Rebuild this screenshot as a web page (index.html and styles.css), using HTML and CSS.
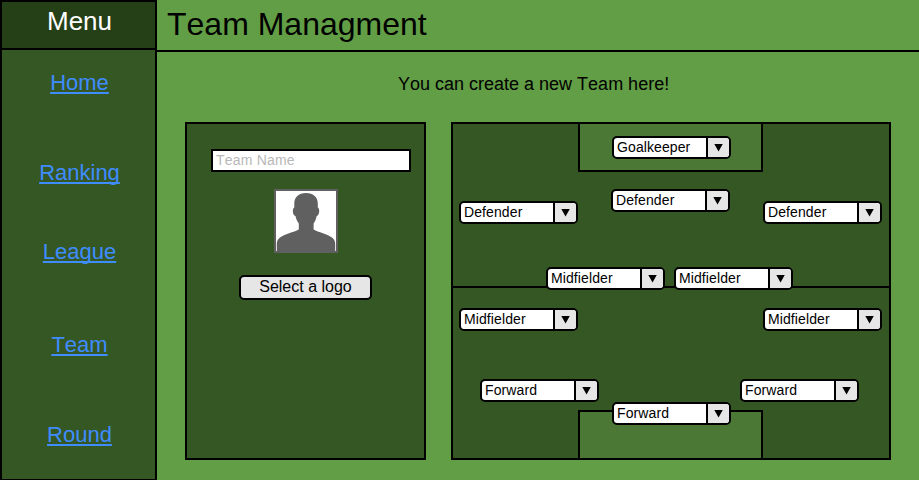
FILE: index.html
```html
<!DOCTYPE html>
<html lang="en">
<head>
<meta charset="utf-8">
<title>Team Managment</title>
<link rel="stylesheet" href="styles.css">
</head>
<body>
<div class="app">
  <aside class="sidebar">
    <h2 class="sidebar-title">Menu</h2>
    <nav class="nav">
      <a class="nav-home" href="#">Home</a>
      <a class="nav-ranking" href="#">Ranking</a>
      <a class="nav-league" href="#">League</a>
      <a class="nav-team" href="#">Team</a>
      <a class="nav-round" href="#">Round</a>
    </nav>
  </aside>
  <main class="main">
    <h1 class="title">Team Managment</h1>
    <p class="intro">You can create a new Team here!</p>
    <div class="panels">
      <section class="team-card">
        <input class="team-name" type="text" placeholder="Team Name">
        <svg class="avatar" viewBox="0 0 64 64">
          <rect x="1" y="1" width="62" height="62" fill="#fff" stroke="#606060" stroke-width="2"/>
          <path fill="#606060" d="M32 4C24.500 4 20.300 8.500 20.300 14.500V18.500C18.200 19.500 18.300 26 21.500 27C22 30.500 23.500 32.500 24.800 34.500V40.500C20 43 10 45.500 6 48.500C3.500 50.500 2.800 52.500 2.800 55V62H61.200V55C61.200 52.500 60.500 50.500 58 48.500C54 45.500 44 43 39.600 40.500V34.500C41 32.500 42 30.500 42.700 27C45.800 26 45.900 19.500 43.800 18.500V14.500C43.800 8.500 39.500 4 32 4Z"/>
        </svg>
        <button class="logo-button" type="button">Select a logo</button>
      </section>
      <section class="pitch">
        <div class="goal goal-top"></div>
        <div class="halfway"></div>
        <div class="goal goal-bottom"></div>
        <div class="select goalkeeper"><span>Goalkeeper</span><i></i></div>
        <div class="select defender-left"><span>Defender</span><i></i></div>
        <div class="select defender-center"><span>Defender</span><i></i></div>
        <div class="select defender-right"><span>Defender</span><i></i></div>
        <div class="select mid-center-left"><span>Midfielder</span><i></i></div>
        <div class="select mid-center-right"><span>Midfielder</span><i></i></div>
        <div class="select mid-left"><span>Midfielder</span><i></i></div>
        <div class="select mid-right"><span>Midfielder</span><i></i></div>
        <div class="select forward-left"><span>Forward</span><i></i></div>
        <div class="select forward-right"><span>Forward</span><i></i></div>
        <div class="select forward-center"><span>Forward</span><i></i></div>
      </section>
    </div>
  </main>
</div>
</body>
</html>
```
FILE: styles.css
```css
* { box-sizing: border-box; }

body {
  margin: 0;
  font-family: "Liberation Sans", Arial, sans-serif;
  font-kerning: none;
  color: #000;
  background: #629e45;
}

.app {
  display: flex;
  height: 480px;
  overflow: hidden;
}

.sidebar {
  width: 157px;
  height: 481px;
  border: 2px solid #000;
  background: #355723;
}

.sidebar-title {
  height: 48px;
  margin: 0;
  padding: 4px 0 0 2px;
  border-bottom: 2px solid #000;
  background: #253f17;
  color: #fff;
  font-size: 26px;
  font-weight: 400;
  line-height: 30px;
  text-align: center;
}

.nav {
  display: flex;
  flex-direction: column;
  align-items: center;
  padding: 20px 0 0 2px;
}

.nav a {
  color: #3f8cff;
  font-size: 22px;
  line-height: 26px;
  text-decoration: underline;
  text-decoration-thickness: 2px;
  text-decoration-skip-ink: none;
  text-underline-offset: 2px;
}

.nav-home { margin-bottom: 64px; }
.nav-ranking { margin-bottom: 53px; }
.nav-league { margin-bottom: 67px; }
.nav-team { margin-bottom: 64px; }

.main { flex: 1; }

.title {
  height: 52px;
  margin: 0;
  padding: 6px 0 0 10px;
  border-bottom: 2px solid #000;
  font-size: 32px;
  font-weight: 400;
  line-height: 36px;
}

.intro {
  margin: 22px 0 28px 241px;
  font-size: 18px;
  line-height: 20px;
}

.panels {
  display: flex;
  gap: 25px;
  padding-left: 28px;
}

.team-card,
.pitch {
  height: 338px;
  border: 2px solid #000;
  background: #355723;
}

.team-card {
  display: flex;
  flex-direction: column;
  align-items: center;
  width: 241px;
  padding: 25px 0 0 1px;
}

.team-name {
  width: 200px;
  height: 23px;
  margin-left: 10px;
  padding: 0 3px 2px;
  border: 2px solid #000;
  border-radius: 0;
  background: #fff;
  font: 14px "Liberation Sans", Arial, sans-serif;
  font-kerning: none;
  letter-spacing: 0.2px;
}

.team-name::placeholder { color: #b8b8b8; }

.avatar {
  display: block;
  width: 64px;
  height: 64px;
  margin: 17px 0 22px;
}

.logo-button {
  width: 133px;
  height: 25px;
  margin-right: 2px;
  padding: 0 0 2px 1px;
  border: 2px solid #000;
  border-radius: 5px;
  background: #e6e6e6;
  color: #000;
  font: 16px/18px "Liberation Sans", Arial, sans-serif;
}

/* Football pitch: players are placed freely on the field */
.pitch {
  position: relative;
  width: 440px;
}

.goal {
  position: absolute;
  left: 125px;
  width: 185px;
  height: 50px;
  border: 2px solid #000;
  background: #4b7935;
}

.goal-top { top: -2px; }
.goal-bottom { bottom: -2px; }

.halfway {
  position: absolute;
  top: 162px;
  left: 0;
  width: 100%;
  height: 2px;
  background: #000;
}

.select {
  position: absolute;
  display: flex;
  width: 119px;
  height: 23px;
  overflow: hidden;
  border: 2px solid #000;
  border-radius: 5px;
  background: #fff;
  font-size: 14px;
  line-height: 18px;
  letter-spacing: 0.1px;
}

.select span {
  flex: 1;
  padding-left: 3px;
}

.select i {
  display: flex;
  align-items: center;
  justify-content: center;
  width: 23px;
  border-left: 2px solid #000;
  background: #e6e6e6;
}

.select i::before {
  content: "";
  width: 9px;
  height: 8px;
  background: #000;
  clip-path: polygon(0 0, 100% 0, 50% 100%);
}

.goalkeeper { left: 159px; top: 12px; }
.defender-left { left: 6px; top: 77px; }
.defender-center { left: 158px; top: 65px; }
.defender-right { left: 310px; top: 77px; }
.mid-center-left { left: 93px; top: 143px; }
.mid-center-right { left: 221px; top: 143px; }
.mid-left { left: 6px; top: 184px; }
.mid-right { left: 310px; top: 184px; }
.forward-left { left: 27px; top: 255px; }
.forward-right { left: 287px; top: 255px; }
.forward-center { left: 159px; top: 278px; }
```
